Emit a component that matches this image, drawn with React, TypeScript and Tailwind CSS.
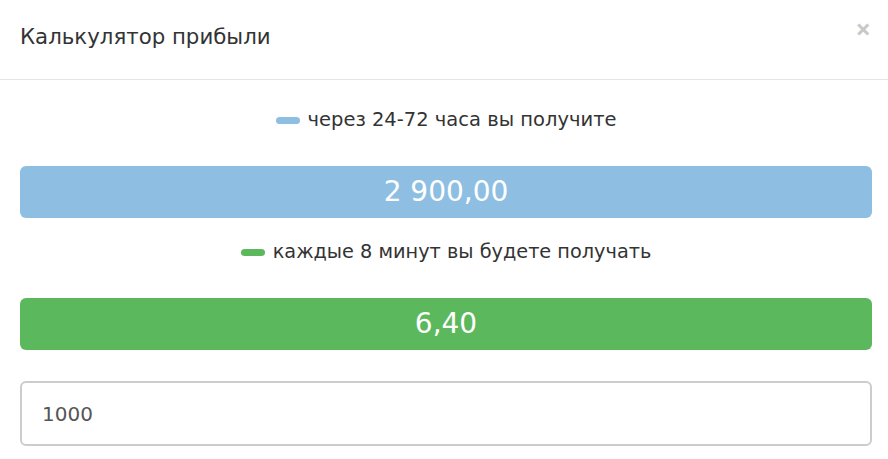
import React from "react";

export default function App() {
  const font = { fontFamily: '"DejaVu Sans", "Noto Sans", sans-serif' };
  return (
    <div className="w-[888px] h-[459px] bg-white overflow-hidden" style={font}>
      <div className="h-[80px] border-b border-[#e5e5e5] flex items-start justify-between pl-5 pr-[17px]">
        <h4 className="mt-[23px] text-[21.3px] leading-[28px] text-[#333]">Калькулятор прибыли</h4>
        <button className="mt-[15px] text-[27px] font-bold leading-[27px] text-[#c8c8c8]" style={{ fontFamily: '"Noto Sans", sans-serif' }}>×</button>
      </div>
      <div className="pl-5 pr-4">
        <div className="mt-[28px] h-6 flex items-center justify-center gap-[8px] text-[19.5px] text-[#333]">
          <span className="inline-block w-[24px] h-[7px] rounded-full bg-[#8ebfe3]"></span>
          <span>через 24-72 часа вы получите</span>
        </div>
        <div className="mt-[34px] h-[52px] rounded-[6px] bg-[#8ebfe3] flex items-center justify-center text-white text-[28px]">
          2 900,00
        </div>
        <div className="mt-[22px] h-6 flex items-center justify-center gap-[8px] text-[19.3px] text-[#333]">
          <span className="inline-block w-[24px] h-[7px] rounded-full bg-[#5cb85c]"></span>
          <span>каждые 8 минут вы будете получать</span>
        </div>
        <div className="mt-[34px] h-[52px] rounded-[6px] bg-[#5cb85c] flex items-center justify-center text-white text-[28px]">
          6,40
        </div>
        <input
          className="mt-[31px] block w-full h-[65px] rounded-[6px] border-2 border-[#cccccc] px-5 text-[20px] text-[#555] outline-none"
          style={font}
          defaultValue="1000"
        />
      </div>
    </div>
  );
}
